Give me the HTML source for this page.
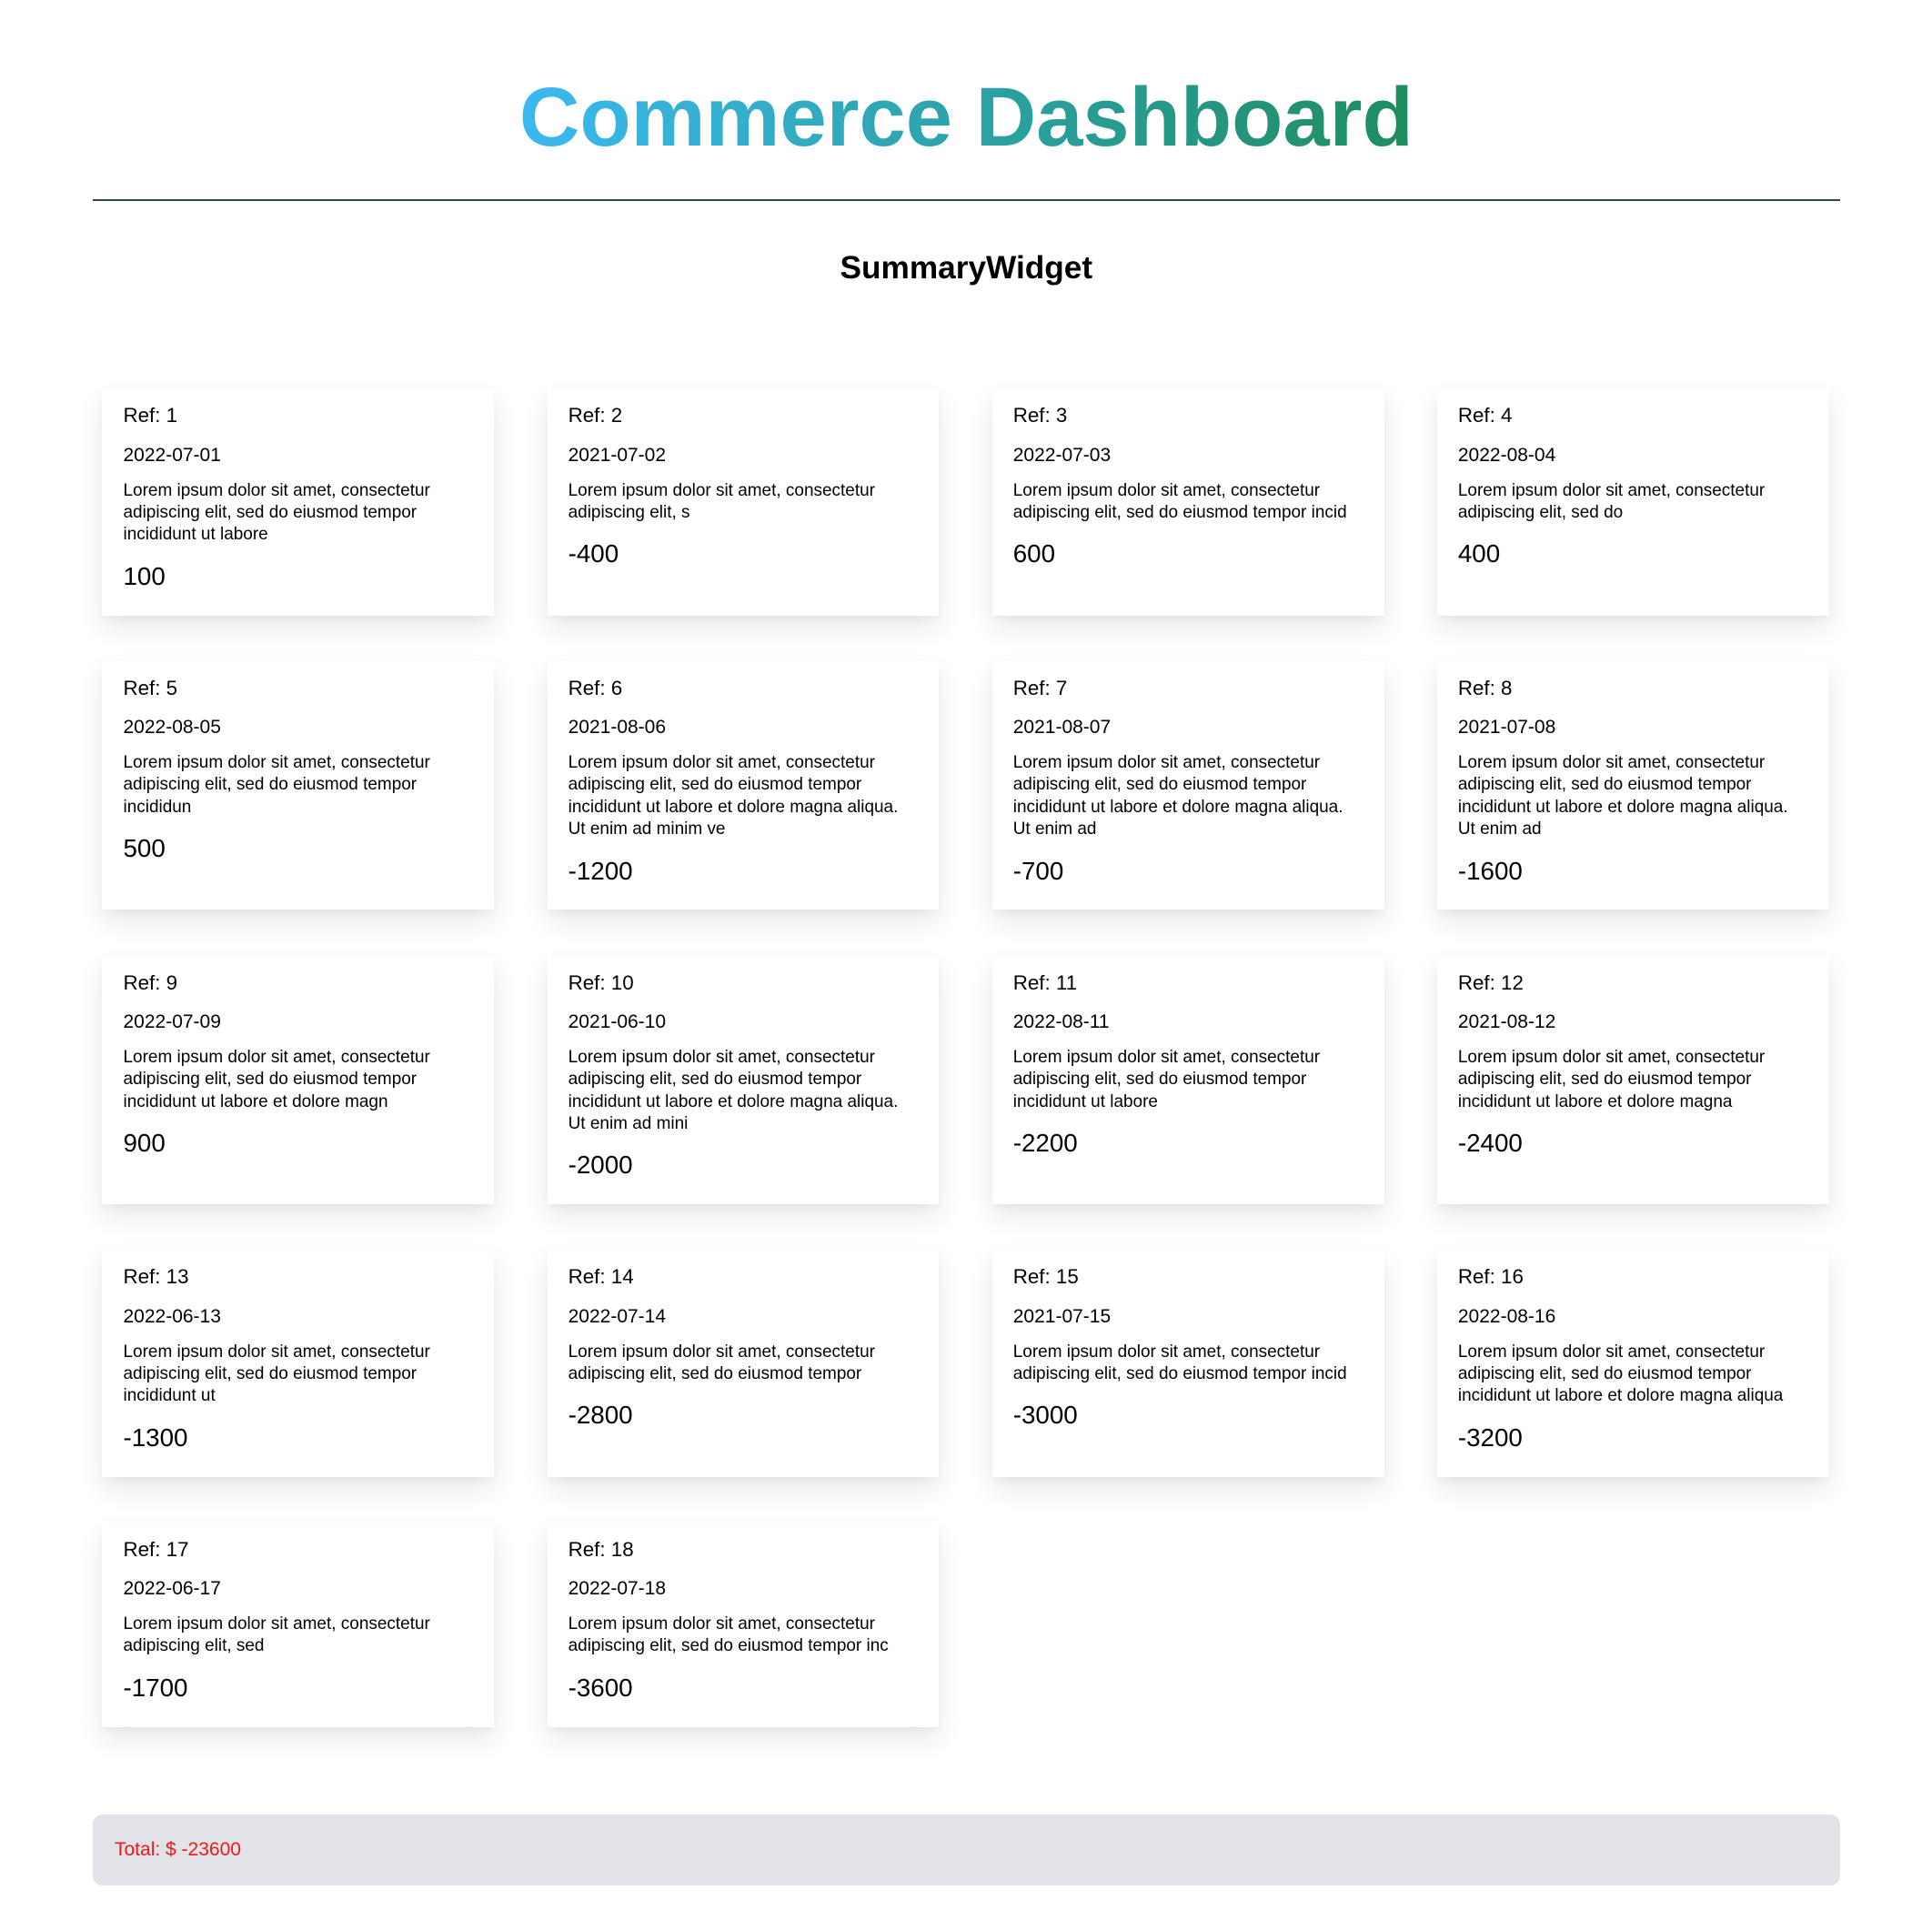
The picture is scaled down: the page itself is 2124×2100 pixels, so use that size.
<!DOCTYPE html>
<html><head><meta charset="utf-8">
<style>
html{zoom:1.355;}
body{margin:0;background:#fff;font-family:"Liberation Sans",Arial,sans-serif;color:#000;}
.wrap{width:1418px;margin-left:75px;}
h1{margin:0;padding-top:57px;height:76px;line-height:76px;text-align:center;font-size:68px;font-weight:bold;}
h1 span{background:linear-gradient(90deg,#3bb9f0,#1e8c5f);-webkit-background-clip:text;background-clip:text;color:transparent;}
hr{margin:29px 0 0 0;border:0;border-top:2px solid #334155;height:0;}
h2{margin:0;margin-top:38px;text-align:center;font-size:26px;line-height:32px;font-weight:bold;}
.grid{display:grid;grid-template-columns:repeat(4,318px);column-gap:43px;row-gap:37px;margin:82px 0 0 8px;}
.card{background:#fff;box-shadow:0 10px 20px rgba(0,0,0,0.09),0 4px 6px rgba(0,0,0,0.03);padding:11px 17px 19px 17px;}
.ref{font-size:16.5px;line-height:22px;margin:0;}
.date{font-size:15.5px;line-height:20px;margin:11px 0 0 0;}
.desc{font-size:14px;line-height:18px;margin:10px 0 0 0;padding-right:4px;}
.amt{font-size:20.5px;line-height:26px;margin:11px 0 0 0;}
.total{margin-top:71px;background:#e1e3e8;border-radius:8px;height:58px;line-height:58px;padding-left:18px;color:#f01818;font-size:15.5px;}
</style></head><body>
<div class="wrap">
<h1><span>Commerce Dashboard</span></h1>
<hr>
<h2>SummaryWidget</h2>
<div class="grid">
<div class="card"><p class="ref">Ref: 1</p><p class="date">2022-07-01</p><p class="desc">Lorem ipsum dolor sit amet, consectetur adipiscing elit, sed do eiusmod tempor incididunt ut labore</p><p class="amt">100</p></div>
<div class="card"><p class="ref">Ref: 2</p><p class="date">2021-07-02</p><p class="desc">Lorem ipsum dolor sit amet, consectetur adipiscing elit, s</p><p class="amt">-400</p></div>
<div class="card"><p class="ref">Ref: 3</p><p class="date">2022-07-03</p><p class="desc">Lorem ipsum dolor sit amet, consectetur adipiscing elit, sed do eiusmod tempor incid</p><p class="amt">600</p></div>
<div class="card"><p class="ref">Ref: 4</p><p class="date">2022-08-04</p><p class="desc">Lorem ipsum dolor sit amet, consectetur adipiscing elit, sed do</p><p class="amt">400</p></div>
<div class="card"><p class="ref">Ref: 5</p><p class="date">2022-08-05</p><p class="desc">Lorem ipsum dolor sit amet, consectetur adipiscing elit, sed do eiusmod tempor incididun</p><p class="amt">500</p></div>
<div class="card"><p class="ref">Ref: 6</p><p class="date">2021-08-06</p><p class="desc">Lorem ipsum dolor sit amet, consectetur adipiscing elit, sed do eiusmod tempor incididunt ut labore et dolore magna aliqua. Ut enim ad minim ve</p><p class="amt">-1200</p></div>
<div class="card"><p class="ref">Ref: 7</p><p class="date">2021-08-07</p><p class="desc">Lorem ipsum dolor sit amet, consectetur adipiscing elit, sed do eiusmod tempor incididunt ut labore et dolore magna aliqua. Ut enim ad</p><p class="amt">-700</p></div>
<div class="card"><p class="ref">Ref: 8</p><p class="date">2021-07-08</p><p class="desc">Lorem ipsum dolor sit amet, consectetur adipiscing elit, sed do eiusmod tempor incididunt ut labore et dolore magna aliqua. Ut enim ad</p><p class="amt">-1600</p></div>
<div class="card"><p class="ref">Ref: 9</p><p class="date">2022-07-09</p><p class="desc">Lorem ipsum dolor sit amet, consectetur adipiscing elit, sed do eiusmod tempor incididunt ut labore et dolore magn</p><p class="amt">900</p></div>
<div class="card"><p class="ref">Ref: 10</p><p class="date">2021-06-10</p><p class="desc">Lorem ipsum dolor sit amet, consectetur adipiscing elit, sed do eiusmod tempor incididunt ut labore et dolore magna aliqua. Ut enim ad mini</p><p class="amt">-2000</p></div>
<div class="card"><p class="ref">Ref: 11</p><p class="date">2022-08-11</p><p class="desc">Lorem ipsum dolor sit amet, consectetur adipiscing elit, sed do eiusmod tempor incididunt ut labore</p><p class="amt">-2200</p></div>
<div class="card"><p class="ref">Ref: 12</p><p class="date">2021-08-12</p><p class="desc">Lorem ipsum dolor sit amet, consectetur adipiscing elit, sed do eiusmod tempor incididunt ut labore et dolore magna</p><p class="amt">-2400</p></div>
<div class="card"><p class="ref">Ref: 13</p><p class="date">2022-06-13</p><p class="desc">Lorem ipsum dolor sit amet, consectetur adipiscing elit, sed do eiusmod tempor incididunt ut</p><p class="amt">-1300</p></div>
<div class="card"><p class="ref">Ref: 14</p><p class="date">2022-07-14</p><p class="desc">Lorem ipsum dolor sit amet, consectetur adipiscing elit, sed do eiusmod tempor</p><p class="amt">-2800</p></div>
<div class="card"><p class="ref">Ref: 15</p><p class="date">2021-07-15</p><p class="desc">Lorem ipsum dolor sit amet, consectetur adipiscing elit, sed do eiusmod tempor incid</p><p class="amt">-3000</p></div>
<div class="card"><p class="ref">Ref: 16</p><p class="date">2022-08-16</p><p class="desc">Lorem ipsum dolor sit amet, consectetur adipiscing elit, sed do eiusmod tempor incididunt ut labore et dolore magna aliqua</p><p class="amt">-3200</p></div>
<div class="card"><p class="ref">Ref: 17</p><p class="date">2022-06-17</p><p class="desc">Lorem ipsum dolor sit amet, consectetur adipiscing elit, sed</p><p class="amt">-1700</p></div>
<div class="card"><p class="ref">Ref: 18</p><p class="date">2022-07-18</p><p class="desc">Lorem ipsum dolor sit amet, consectetur adipiscing elit, sed do eiusmod tempor inc</p><p class="amt">-3600</p></div>
</div>
<div class="total">Total: $ -23600</div>
</div>
</body></html>
